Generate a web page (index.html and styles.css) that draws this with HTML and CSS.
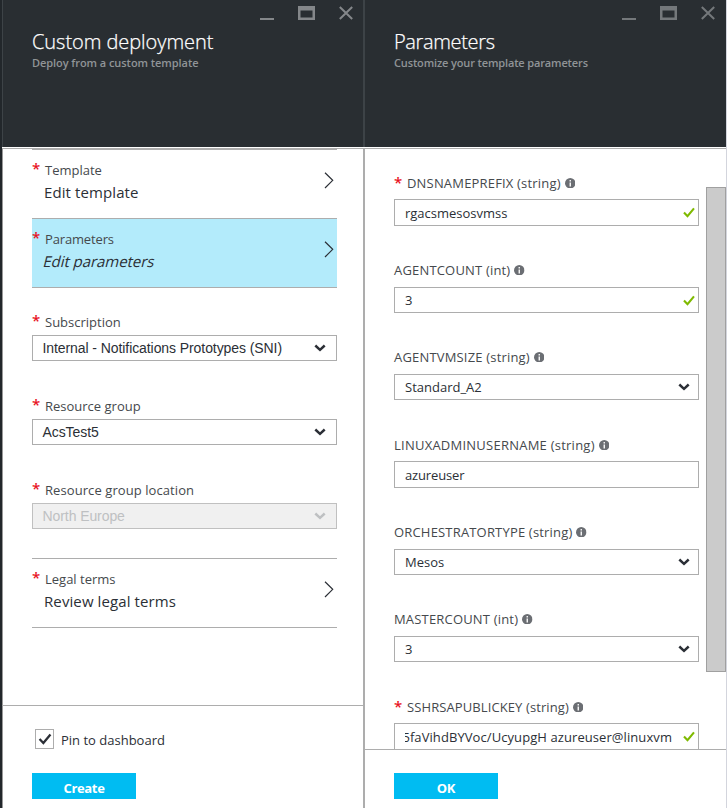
FILE: index.html
```html
<!DOCTYPE html>
<html lang="en">
<head>
<meta charset="utf-8">
<title>Custom deployment</title>
<link rel="stylesheet" href="styles.css">
</head>
<body>
<svg width="0" height="0" class="defs" aria-hidden="true">
  <symbol id="winctl" viewBox="0 0 94 16">
    <path d="M0 14h14" stroke="currentColor" stroke-width="2" fill="none"/>
    <path fill="currentColor" fill-rule="evenodd" d="M38 1h17v14H38zM40.500 5.500v7h12v-7z"/>
    <path d="M79.800 2l12.400 12M92.200 2l-12.400 12" stroke="currentColor" stroke-width="2" fill="none"/>
  </symbol>
  <symbol id="next" viewBox="0 0 10 17"><path d="M1 .8l7.700 7.500L1 16" fill="none" stroke="currentColor" stroke-width="1.200"/></symbol>
  <symbol id="down" viewBox="0 0 12 8"><path d="M1.300 1.500L6 5.800l4.700-4.300" fill="none" stroke="currentColor" stroke-width="2.500"/></symbol>
  <symbol id="tick" viewBox="0 0 12 11"><path d="M1 5.500l3.500 3.700L11 1.300" fill="none" stroke="currentColor" stroke-width="2.100"/></symbol>
  <symbol id="info" viewBox="0 0 10 10"><circle cx="5" cy="5" r="5" fill="#6b6e73"/><path d="M5 2v1.400M5 4.300v3.700" stroke="#fff" stroke-width="1.300" fill="none"/></symbol>
</svg>
<main class="app">
  <section class="blade first">
    <header class="head">
      <svg class="winctl"><use href="#winctl"/></svg>
      <h1 class="t-custom">Custom deployment</h1>
      <p class="t-deploy">Deploy from a custom template</p>
    </header>
    <div class="body">
      <div class="item top"><div><div class="label"><i class="req">*</i><span class="l-template">Template</span></div><div class="value v-template">Edit template</div></div><svg class="next"><use href="#next"/></svg></div>
      <div class="item selected"><div><div class="label"><i class="req">*</i><span class="l-parameters">Parameters</span></div><div class="value v-parameters">Edit parameters</div></div><svg class="next"><use href="#next"/></svg></div>
      <div class="fields">
        <div class="field"><div class="label"><i class="req">*</i><span class="l-subscription">Subscription</span></div><div class="box"><span class="v-subscription">Internal - Notifications Prototypes (SNI)</span><svg class="down"><use href="#down"/></svg></div></div>
        <div class="field"><div class="label"><i class="req">*</i><span class="l-group">Resource group</span></div><div class="box"><span class="v-group">AcsTest5</span><svg class="down"><use href="#down"/></svg></div></div>
        <div class="field"><div class="label"><i class="req">*</i><span class="l-location">Resource group location</span></div><div class="box disabled"><span class="v-location">North Europe</span><svg class="down"><use href="#down"/></svg></div></div>
      </div>
      <div class="item legal"><div><div class="label"><i class="req">*</i><span class="l-legal">Legal terms</span></div><div class="value v-legal">Review legal terms</div></div><svg class="next"><use href="#next"/></svg></div>
    </div>
    <footer class="foot">
      <div class="pin"><span class="check"><svg class="checktick"><use href="#tick"/></svg></span><span class="l-pin">Pin to dashboard</span></div>
      <div class="button"><span class="b-create">Create</span></div>
    </footer>
  </section>
  <section class="blade second">
    <header class="head">
      <svg class="winctl"><use href="#winctl"/></svg>
      <h1 class="t-params">Parameters</h1>
      <p class="t-customize">Customize your template parameters</p>
    </header>
    <div class="body">
      <div class="params">
        <div class="field"><div class="label"><i class="req">*</i><span class="l-dns">DNSNAMEPREFIX (string)</span><svg class="info"><use href="#info"/></svg></div><div class="box text"><span class="v-dns">rgacsmesosvmss</span><svg class="tick"><use href="#tick"/></svg></div></div>
        <div class="field"><div class="label"><span class="l-agents">AGENTCOUNT (int)</span><svg class="info"><use href="#info"/></svg></div><div class="box"><span>3</span><svg class="tick"><use href="#tick"/></svg></div></div>
        <div class="field tall"><div class="label"><span class="l-vmsize">AGENTVMSIZE (string)</span><svg class="info"><use href="#info"/></svg></div><div class="box"><span class="v-vmsize">Standard_A2</span><svg class="down"><use href="#down"/></svg></div></div>
        <div class="field"><div class="label"><span class="l-admin">LINUXADMINUSERNAME (string)</span><svg class="info"><use href="#info"/></svg></div><div class="box text"><span class="v-admin">azureuser</span></div></div>
        <div class="field"><div class="label"><span class="l-orch">ORCHESTRATORTYPE (string)</span><svg class="info"><use href="#info"/></svg></div><div class="box"><span class="v-orch">Mesos</span><svg class="down"><use href="#down"/></svg></div></div>
        <div class="field tall"><div class="label"><span class="l-masters">MASTERCOUNT (int)</span><svg class="info"><use href="#info"/></svg></div><div class="box"><span>3</span><svg class="down"><use href="#down"/></svg></div></div>
        <div class="field"><div class="label"><i class="req">*</i><span class="l-ssh">SSHRSAPUBLICKEY (string)</span><svg class="info"><use href="#info"/></svg></div><div class="box text"><span class="key"><span class="v-key">5faVihdBYVoc/UcyupgH azureuser@linuxvm</span></span><svg class="tick"><use href="#tick"/></svg></div></div>
      </div>
      <div class="scrollbar"></div>
    </div>
    <footer class="foot"><div class="button"><span class="b-ok">OK</span></div></footer>
  </section>
</main>
</body>
</html>
```
FILE: styles.css
```css
* { box-sizing: border-box; }
body { margin: 0; font: 13px/18px "Open Sans", "Noto Sans", sans-serif; color: #2b2f36; }
h1, p { margin: 0; }
svg { display: block; flex: none; }
.defs { position: absolute; }
.app { display: grid; grid-template-columns: 361px 361px; column-gap: 2px; width: 727px; height: 808px; padding-left: 2px; overflow: hidden;
  background: linear-gradient(#3d4347, #3d4347) 363px 0 / 2px 147px no-repeat, linear-gradient(#adadad, #adadad) 363px 148px / 2px 660px no-repeat, linear-gradient(#d3d5dd, #d3d5dd) 726px 0 / 1px 808px no-repeat, linear-gradient(#22272b, #22272b) 0 0 / 2px 808px no-repeat, #fff; }
.blade { display: flex; flex-direction: column; height: 808px; background: #fff; white-space: nowrap; }
.head { height: 147px; flex: none; background: #292e32; padding: 5px 0 0 30px; }
.first .head { border-left: 1px solid #3d4347; padding-left: 29px; }
.second .head { padding-left: 29px; }
.winctl { width: 94px; height: 16px; margin-left: 228px; color: #84878a; }
.second .winctl { color: #74787b; }
h1 { font-size: 20px; line-height: 28px; margin-top: 7px; font-weight: 300; color: #fff; -webkit-text-stroke: .25px #fff; }
.t-custom { letter-spacing: -.05px; }
.t-params { letter-spacing: -.35px; }
p { font-size: 11px; line-height: 16px; font-weight: 600; color: #909497; margin-top: -1px; }
.t-deploy { letter-spacing: -.06px; }
.t-customize { letter-spacing: -.14px; }
.body { flex: 1; min-height: 0; margin-top: 1px; border-top: 1px solid #adadad; overflow: hidden; padding-left: 29px; }
.first .body, .first .foot { border-left: 1px solid #999; }
.item { width: 305px; height: 69px; border-bottom: 1px solid #adadad; display: flex; justify-content: space-between; padding: 11px 3px 0 0; }
.item.top { height: 70px; border-top: 1px solid #adadad; }
.item.selected { background: #b3ebfb; }
.item.legal { height: 70px; border-top: 1px solid #adadad; margin-top: 23px; }
.label { display: flex; align-items: center; height: 18px; color: #45494d; }
.req { width: 13px; height: 18px; font: 600 15px/17px "Open Sans", sans-serif; color: #e81123; }
.first .req { line-height: 15px; }
.value { font-size: 15px; line-height: 22px; padding: 2px 0 0 12px; letter-spacing: .1px; }
.v-parameters { transform: skewX(-14deg); letter-spacing: -.05px; }
.l-parameters { letter-spacing: -.15px; }
.l-location { letter-spacing: .08px; }
.next { width: 10px; height: 17px; margin-top: 11px; }
.fields { padding-top: 25px; }
.field .label { margin-bottom: 4px; }
.fields .field { height: 84px; }
.fields .field:last-child { height: 62px; margin-bottom: -8px; }
.fields .box { font: 14px/24px "Liberation Sans", sans-serif; letter-spacing: -.08px; padding-left: 9.5px; }
.box { width: 305px; height: 26px; border: 1px solid #adadad; display: flex; align-items: center; justify-content: space-between; padding: 0 8px 0 10px; line-height: 24px; }
.fields .box { padding-right: 10px; }
.box.disabled { background: #f0f0f0; border-color: #c0c0c0; color: #bec0c2; }
.down { width: 12px; height: 8px; }
.tick { width: 12px; height: 11px; margin-right: -5px; color: #7fba00; }
.info { width: 10.5px; height: 10.5px; margin-left: 4px; }
.foot { flex: none; border-top: 1px solid #adadad; padding-left: 29px; }
.first .foot { height: 103px; padding-top: 23px; }
.second .foot { height: 59px; padding-top: 23px; }
.pin { display: flex; align-items: center; height: 20px; margin: 0 0 24px 3px; gap: 7px; }
.l-pin { padding-top: 2px; }
.check { width: 19px; height: 20px; border: 1px solid #adadad; display: flex; align-items: center; justify-content: center; }
.checktick { width: 14px; height: 12px; }
.button { width: 104px; height: 26px; background: #00bcf2; color: #fff; font-weight: 700; line-height: 30px; text-align: center; }
.b-create { letter-spacing: -.35px; }
.b-ok { letter-spacing: -.2px; }
.second .body { display: flex; justify-content: space-between; }
.params { padding-top: 25px; }
.params .field { height: 87px; }
.params .field.tall { height: 88px; }
.params .label { margin-bottom: 8px; letter-spacing: .18px; }
.params .box { height: 26px; }
.params .box.text { height: 27px; line-height: 27px; margin-top: -1px; }
.l-admin { letter-spacing: .24px; }
.l-ssh { letter-spacing: .1px; }
.v-admin { letter-spacing: -.15px; padding-top: 2px; }
.v-dns, .v-key { position: relative; top: 1px; }
.scrollbar { width: 20px; height: 485px; margin-top: 38px; background: #cbcbcb; border: 1px solid #a0a0a0; }
.key { width: 267px; overflow: hidden; display: flex; justify-content: flex-end; }
.v-key { letter-spacing: .08px; }
```
